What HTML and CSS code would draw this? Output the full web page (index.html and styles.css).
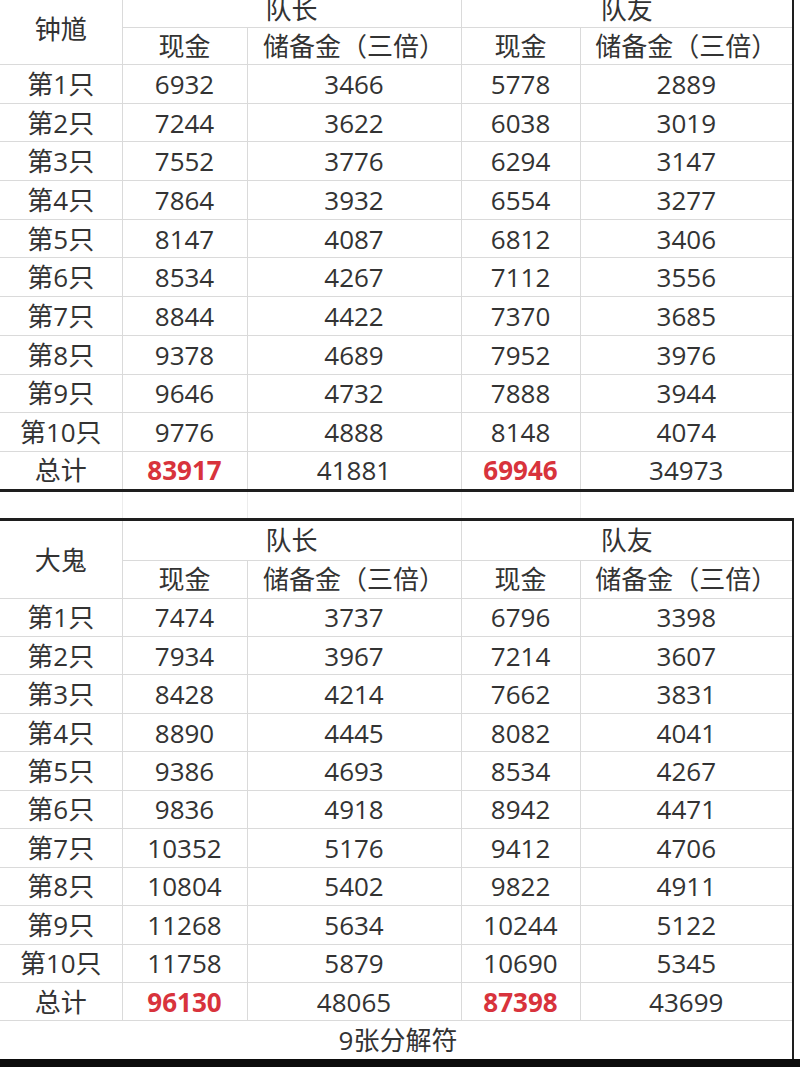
FILE: index.html
```html
<!DOCTYPE html>
<html lang="zh-CN">
<head>
<meta charset="utf-8">
<title>钟馗 / 大鬼</title>
<link rel="stylesheet" href="styles.css">
</head>
<body>
<div class="sheet">
  <table class="grid grid-top">
    <colgroup><col class="c1"><col class="c2"><col class="c3"><col class="c4"><col class="c5"></colgroup>
    <thead>
      <tr class="h1"><th rowspan="2" class="name">钟馗</th><th colspan="2" class="grp">队长</th><th colspan="2" class="grp last">队友</th></tr>
      <tr class="h2"><th>现金</th><th>储备金（三倍）</th><th>现金</th><th class="last">储备金（三倍）</th></tr>
    </thead>
    <tbody>
      <tr><td class="label">第1只</td><td>6932</td><td>3466</td><td>5778</td><td class="last">2889</td></tr>
      <tr><td class="label">第2只</td><td>7244</td><td>3622</td><td>6038</td><td class="last">3019</td></tr>
      <tr><td class="label">第3只</td><td>7552</td><td>3776</td><td>6294</td><td class="last">3147</td></tr>
      <tr><td class="label">第4只</td><td>7864</td><td>3932</td><td>6554</td><td class="last">3277</td></tr>
      <tr><td class="label">第5只</td><td>8147</td><td>4087</td><td>6812</td><td class="last">3406</td></tr>
      <tr><td class="label">第6只</td><td>8534</td><td>4267</td><td>7112</td><td class="last">3556</td></tr>
      <tr><td class="label">第7只</td><td>8844</td><td>4422</td><td>7370</td><td class="last">3685</td></tr>
      <tr><td class="label">第8只</td><td>9378</td><td>4689</td><td>7952</td><td class="last">3976</td></tr>
      <tr><td class="label">第9只</td><td>9646</td><td>4732</td><td>7888</td><td class="last">3944</td></tr>
      <tr><td class="label">第10只</td><td>9776</td><td>4888</td><td>8148</td><td class="last">4074</td></tr>
      <tr class="total"><td class="label">总计</td><td class="red">83917</td><td>41881</td><td class="red">69946</td><td class="last">34973</td></tr>
    </tbody>
  </table>

  <table class="grid grid-gap">
    <colgroup><col class="c1"><col class="c2"><col class="c3"><col class="c4"><col class="c5"></colgroup>
    <tbody><tr class="gap"><td></td><td></td><td></td><td></td><td></td></tr></tbody>
  </table>

  <table class="grid grid-bottom">
    <colgroup><col class="c1"><col class="c2"><col class="c3"><col class="c4"><col class="c5"></colgroup>
    <thead>
      <tr class="h1"><th rowspan="2" class="name">大鬼</th><th colspan="2" class="grp">队长</th><th colspan="2" class="grp last">队友</th></tr>
      <tr class="h2"><th>现金</th><th>储备金（三倍）</th><th>现金</th><th class="last">储备金（三倍）</th></tr>
    </thead>
    <tbody>
      <tr><td class="label">第1只</td><td>7474</td><td>3737</td><td>6796</td><td class="last">3398</td></tr>
      <tr><td class="label">第2只</td><td>7934</td><td>3967</td><td>7214</td><td class="last">3607</td></tr>
      <tr><td class="label">第3只</td><td>8428</td><td>4214</td><td>7662</td><td class="last">3831</td></tr>
      <tr><td class="label">第4只</td><td>8890</td><td>4445</td><td>8082</td><td class="last">4041</td></tr>
      <tr><td class="label">第5只</td><td>9386</td><td>4693</td><td>8534</td><td class="last">4267</td></tr>
      <tr><td class="label">第6只</td><td>9836</td><td>4918</td><td>8942</td><td class="last">4471</td></tr>
      <tr><td class="label">第7只</td><td>10352</td><td>5176</td><td>9412</td><td class="last">4706</td></tr>
      <tr><td class="label">第8只</td><td>10804</td><td>5402</td><td>9822</td><td class="last">4911</td></tr>
      <tr><td class="label">第9只</td><td>11268</td><td>5634</td><td>10244</td><td class="last">5122</td></tr>
      <tr><td class="label">第10只</td><td>11758</td><td>5879</td><td>10690</td><td class="last">5345</td></tr>
      <tr class="total"><td class="label">总计</td><td class="red">96130</td><td>48065</td><td class="red">87398</td><td class="last">43699</td></tr>
      <tr class="note"><td colspan="5" class="last">9张分解符</td></tr>
    </tbody>
  </table>
  <div class="band"></div>
</div>
</body>
</html>
```

FILE: styles.css
```css
html, body {
  margin: 0;
  padding: 0;
  background: #ffffff;
}

body {
  width: 800px;
  height: 1067px;
  overflow: hidden;
  font-family: "Open Sans", "Noto Sans CJK SC", sans-serif;
  font-size: 26px;
  color: #333333;
}

.sheet {
  display: flex;
  flex-direction: column;
}

.grid {
  border-collapse: collapse;
  table-layout: fixed;
  width: 793px;
}

.c1 { width: 122px; }
.c2 { width: 125px; }
.c3 { width: 214px; }
.c4 { width: 119px; }
.c5 { width: 213px; }

.grid th,
.grid td {
  padding: 0;
  text-align: center;
  vertical-align: middle;
  line-height: 1;
  font-weight: normal;
  border: 1px solid #dadada;
  white-space: nowrap;
}

.grid th:first-child,
.grid td:first-child {
  border-left: none;
}

.grid .last {
  border-right: 2px solid #1e1e1e;
}

.grid-top {
  margin-top: -10px;
}

.grid-top .h1 { height: 37px; }
.grid-top .h2 { height: 37px; }
.grid-top tbody tr { height: 38.7px; }

.grid-top .total td {
  border-bottom: 3px solid #1e1e1e;
}

.grid-gap .gap { height: 26px; }
.grid-gap td {
  border-top: none;
  border-bottom: none;
  border-color: #ececec;
}
.grid-gap td:last-child {
  border-right: none;
}

.grid-bottom thead .h1 th {
  border-top: 3px solid #1e1e1e;
}
.grid-bottom .h1 { height: 41px; }
.grid-bottom .h2 { height: 38px; }
.grid-bottom tbody tr { height: 38.45px; }
.grid-bottom .note { height: 38px; }

.grid-bottom .note td {
  border-bottom: none;
  padding-left: 4px;
}

.name {
  font-family: "Noto Sans CJK SC", sans-serif;
}

.grid .red {
  color: #d8333c;
  font-weight: 700;
}

.band {
  height: 8px;
  background: #0c0c0c;
  width: 800px;
}
```
